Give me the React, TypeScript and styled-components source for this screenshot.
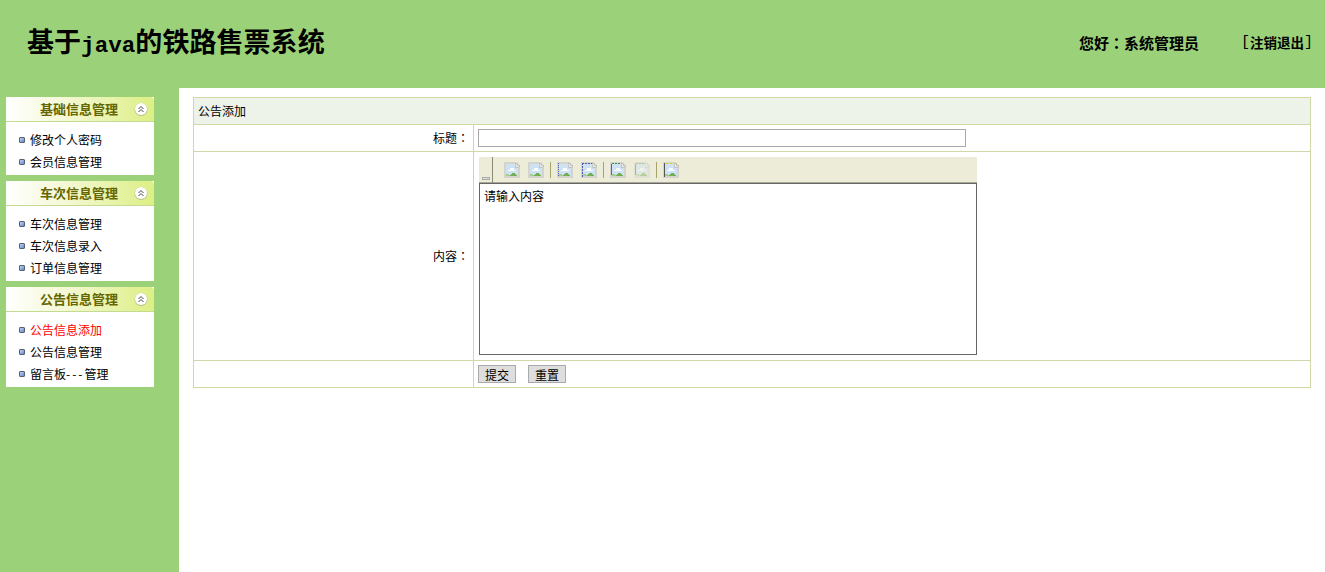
import React from 'react';
import styled, { createGlobalStyle } from 'styled-components';

const GlobalStyle = createGlobalStyle`
  html, body { margin: 0; padding: 0; height: 100%; background: #fff; }
  body { font-family: "Noto Sans CJK SC", "Liberation Sans", sans-serif; font-size: 12px; color: #000; overflow: hidden; }
`;

const Page = styled.div`
  display: flex;
  flex-direction: column;
  width: 1325px;
  height: 572px;
`;
const Header = styled.header`
  display: flex;
  align-items: center;
  box-sizing: border-box;
  height: 88px;
  flex: none;
  background: #9bd279;
  padding: 0 12px 4px 27px;
`;
const Title = styled.h1`
  margin: 0;
  flex: 1;
  font: bold 27px/1 "Noto Sans CJK SC", sans-serif;
  letter-spacing: 0.05px;
`;
const TitleLatin = styled.span`
  font: bold 22.5px/1 "Liberation Mono", monospace;
`;
const Greeting = styled.span`
  font-family: "Noto Sans CJK TC", sans-serif;
  font-size: 15px;
  font-weight: bold;
  margin-right: 42px;
`;
const Logout = styled.a`
  display: flex;
  align-items: center;
  font-size: 13.5px;
  font-weight: bold;
`;
const Bracket = styled.span`
  font: normal 15px/1 "Liberation Mono", monospace;
`;
const Body = styled.div`
  display: flex;
  flex: 1;
`;
const Sidebar = styled.aside`
  width: 179px;
  flex: none;
  background: #9bd279;
  padding: 9px 0 0 6px;
  box-sizing: border-box;
`;
const Panel = styled.section`
  width: 148px;
  margin-bottom: 6px;
  background: #fff;
`;
const PanelHead = styled.div`
  position: relative;
  height: 25px;
  box-sizing: border-box;
  border-bottom: 1px solid #c4dc92;
  border-radius: 4px 4px 0 0;
  background: linear-gradient(90deg, #fff 0%, #f4f8d4 40%, #dcef84 100%);
  color: #666600;
  font-size: 13px;
  font-weight: bold;
  line-height: 24px;
  padding-left: 34px;
`;
const Collapse = styled.span`
  position: absolute;
  right: 6px;
  top: 5px;
  width: 14px;
  height: 14px;
  display: flex;
`;
const MenuList = styled.ul`
  list-style: none;
  margin: 0;
  padding: 6px 0 3px 13px;
`;
const MenuItem = styled.li<{ $active?: boolean }>`
  display: flex;
  align-items: center;
  gap: 5px;
  height: 22px;
  color: ${(p) => (p.$active ? '#ff0000' : '#000')};
  font-size: 12px;
`;
const Bullet = styled.i`
  width: 4px;
  height: 4px;
  margin-top: 2px;
  border: 1px solid #56606e;
  border-radius: 1px;
  background: linear-gradient(135deg, #c0d4f4, #6488cc);
`;
const Dashes = styled.span`
  letter-spacing: 2px;
`;
const Main = styled.main`
  flex: 1;
  padding: 9px 14px 0;
`;
const FormTable = styled.table`
  width: 100%;
  border-collapse: collapse;
  table-layout: fixed;
  td { border: 1px solid #d0d8a8; padding: 0 4px; }
`;
const LabelCol = styled.col`
  width: 280px;
`;
const CaptionCell = styled.td`
  height: 26px;
  background: #edf3e8;
  && { padding-bottom: 2px; box-sizing: border-box; height: 27px; }
`;
const LabelCell = styled.td`
  font-family: "Noto Sans CJK TC", sans-serif;
  text-align: right;
  && { padding-right: 4px; padding-bottom: 2px; }
`;
const FieldCell = styled.td`
  height: 26px;
`;
const TitleInput = styled.input`
  display: block;
  width: 488px;
  height: 18px;
  box-sizing: border-box;
  border: 1px solid #a9a9a9;
  padding: 0;
`;
const Editor = styled.div`
  width: 498px;
  margin: 5px 0 5px 1px;
`;
const Toolbar = styled.div`
  display: flex;
  align-items: center;
  box-sizing: border-box;
  height: 26px;
  background: #edecd9;
  border-bottom: 1px solid #a8a898;
`;
const Grip = styled.span`
  position: relative;
  box-sizing: border-box;
  width: 14px;
  height: 26px;
  margin-right: 11px;
  border-right: 1px solid #8a8a78;
  &::after {
    content: '';
    position: absolute;
    left: 3px;
    bottom: 3px;
    width: 6px;
    height: 1px;
    border: 1px solid #aaa;
    background: #ddd;
  }
`;
const ToolSep = styled.span`
  width: 1px;
  height: 16px;
  margin: 0 6px;
  background: #a3a36b;
`;
const ToolIcon = styled.span<{ $faded?: boolean; $last?: boolean }>`
  display: flex;
  margin-right: ${(p) => (p.$last ? 0 : 8)}px;
  opacity: ${(p) => (p.$faded ? 0.45 : 1)};
`;
const EditArea = styled.div`
  height: 172px;
  box-sizing: border-box;
  border: 1px solid #666;
  padding: 4px 4px;
  line-height: 16px;
`;
const ActionRow = styled.div`
  display: flex;
  gap: 12px;
  padding: 4px 0;
`;
const FormButton = styled.button`
  width: 38px;
  height: 18px;
  padding: 0;
  box-sizing: border-box;
  border: 1px solid #aaa;
  background: #dedede;
  font: 12px "Noto Sans CJK SC", sans-serif;
  color: #000;
`;

type IconMark = 'none' | 'dotted' | 'dashed' | 'thick' | 'yellow';

const ImgIcon = ({ mark = 'none' }: { mark?: IconMark }) => (
  <svg width="16" height="16" viewBox="0 0 16 16" shapeRendering="crispEdges">
    <path d="M0 0 H12 L16 4 V16 H0 Z" fill="#d4d4cc" />
    <rect x="2" y="2" width="12" height="12" fill="#cfe2f4" />
    <path d="M11 1 H13 V3 H15 V5 H11 Z" fill="#e8e8e0" stroke="#aaa" strokeWidth="0.5" />
    <path d="M4 8 H6 V6 H10 V8 H12 V9 H4 Z" fill="#fafcfe" />
    <path d="M5 14 L8 11 H10 L13 14 Z" fill="#72ae52" />
    <path d="M2 14 V12 H4 L6 14 Z" fill="#a4cc8c" />
    {mark === 'dotted' && (
      <path d="M1.5 1 V15" stroke="#4a5cb8" strokeDasharray="1 1" />
    )}
    {mark === 'dashed' && (
      <path d="M1.5 1 V15 M1 1.5 H11" stroke="#4a5cb8" strokeDasharray="2 1" />
    )}
    {mark === 'thick' && (
      <>
        <path d="M1.5 2 V13" stroke="#5560c0" />
        <path d="M2 1.5 H11" stroke="#4a8c60" strokeDasharray="2 1" />
      </>
    )}
    {mark === 'yellow' && (
      <>
        <path d="M1.5 1 V15" stroke="#555" />
        <path d="M3 1.5 H13" stroke="#e0d020" strokeDasharray="2 2" />
      </>
    )}
  </svg>
);

const ChevronIcon = () => (
  <svg width="14" height="14" viewBox="0 0 14 14">
    <circle cx="7" cy="7.5" r="6.5" fill="#b8c088" />
    <circle cx="7" cy="7" r="6" fill="#fff" />
    <path d="M4.5 7 L7 4.5 L9.5 7 M4.5 10 L7 7.5 L9.5 10" fill="none" stroke="#444" />
  </svg>
);

const menus = [
  { title: '基础信息管理', items: ['修改个人密码', '会员信息管理'] },
  { title: '车次信息管理', items: ['车次信息管理', '车次信息录入', '订单信息管理'] },
  { title: '公告信息管理', items: ['公告信息添加', '公告信息管理', '留言板---管理'] },
];

const menuLabel = (item: string) => {
  const parts = item.split('---');
  if (parts.length < 2) return item;
  return (
    <span>
      {parts[0]}
      <Dashes>---</Dashes>
      {parts[1]}
    </span>
  );
};

export default function App() {
  return (
    <Page>
      <GlobalStyle />
      <Header>
        <Title>
          基于<TitleLatin>java</TitleLatin>的铁路售票系统
        </Title>
        <Greeting>您好：系统管理员</Greeting>
        <Logout>
          <Bracket>[</Bracket>注销退出<Bracket>]</Bracket>
        </Logout>
      </Header>
      <Body>
        <Sidebar>
          {menus.map((menu) => (
            <Panel key={menu.title}>
              <PanelHead>
                {menu.title}
                <Collapse><ChevronIcon /></Collapse>
              </PanelHead>
              <MenuList>
                {menu.items.map((item) => (
                  <MenuItem key={item} $active={item === '公告信息添加'}>
                    <Bullet />
                    {menuLabel(item)}
                  </MenuItem>
                ))}
              </MenuList>
            </Panel>
          ))}
        </Sidebar>
        <Main>
          <FormTable>
            <colgroup>
              <LabelCol />
              <col />
            </colgroup>
            <tbody>
              <tr><CaptionCell colSpan={2}>公告添加</CaptionCell></tr>
              <tr>
                <LabelCell>标题：</LabelCell>
                <FieldCell><TitleInput /></FieldCell>
              </tr>
              <tr>
                <LabelCell>内容：</LabelCell>
                <td>
                  <Editor>
                    <Toolbar>
                      <Grip />
                      <ToolIcon><ImgIcon /></ToolIcon>
                      <ToolIcon $last><ImgIcon /></ToolIcon>
                      <ToolSep />
                      <ToolIcon><ImgIcon mark="dotted" /></ToolIcon>
                      <ToolIcon $last><ImgIcon mark="dashed" /></ToolIcon>
                      <ToolSep />
                      <ToolIcon><ImgIcon mark="thick" /></ToolIcon>
                      <ToolIcon $faded $last><ImgIcon mark="thick" /></ToolIcon>
                      <ToolSep />
                      <ToolIcon $last><ImgIcon mark="yellow" /></ToolIcon>
                    </Toolbar>
                    <EditArea>请输入内容</EditArea>
                  </Editor>
                </td>
              </tr>
              <tr>
                <FieldCell />
                <FieldCell>
                  <ActionRow>
                    <FormButton>提交</FormButton>
                    <FormButton>重置</FormButton>
                  </ActionRow>
                </FieldCell>
              </tr>
            </tbody>
          </FormTable>
        </Main>
      </Body>
    </Page>
  );
}
